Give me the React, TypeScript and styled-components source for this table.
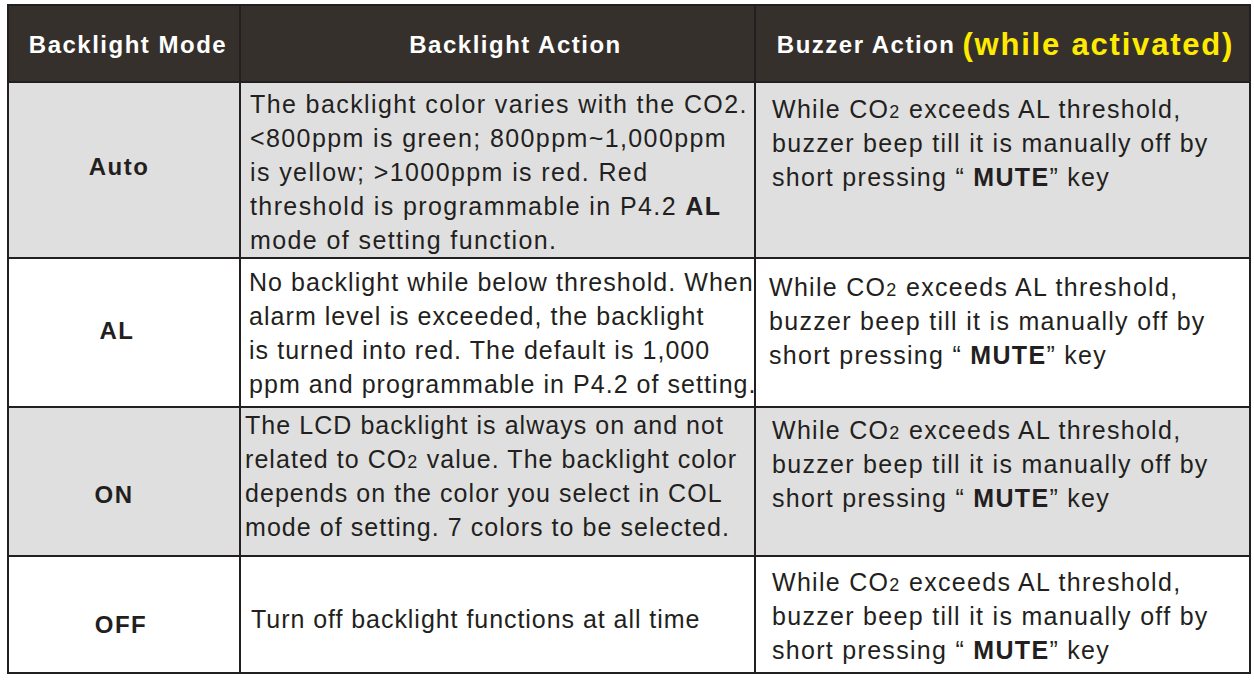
import React from 'react';
import styled, { createGlobalStyle } from 'styled-components';

const GlobalStyle = createGlobalStyle`
  html, body {
    margin: 0;
    padding: 0;
    background: #ffffff;
  }
  body {
    font-family: "Liberation Sans", Arial, sans-serif;
    color: #231f20;
  }
`;

const Page = styled.div`
  padding: 4px 0 0 7px;
`;

const Table = styled.div`
  display: grid;
  grid-template-columns: 230px 513px 493px;
  grid-template-rows: 75px 174px 147px 147px 115px;
  gap: 2px;
  width: max-content;
  background: #231f20;
  border: 2px solid #231f20;
`;

const HeadCell = styled.div<{ $pl?: number }>`
  display: flex;
  align-items: center;
  justify-content: center;
  padding: 2px 0 0 ${(p) => p.$pl ?? 0}px;
  background: #36302c;
  color: #ffffff;
  font-size: 24px;
  font-weight: 700;
  letter-spacing: 1.5px;
  white-space: nowrap;
`;

const Highlight = styled.span`
  color: #ffeb00;
  font-size: 31px;
  letter-spacing: 1.8px;
  margin-left: 7px;
`;

const shift = (v: number) => `${Math.max(v, 0) * 2}px`;

const ModeCell = styled.div<{ $shade: boolean; $dy: number; $dx: number }>`
  display: flex;
  align-items: center;
  justify-content: center;
  padding-top: ${(p) => shift(p.$dy)};
  padding-bottom: ${(p) => shift(-p.$dy)};
  padding-left: ${(p) => shift(p.$dx)};
  padding-right: ${(p) => shift(-p.$dx)};
  background: ${(p) => (p.$shade ? '#dfdfdf' : '#ffffff')};
  font-size: 24px;
  font-weight: 700;
  letter-spacing: 1.5px;
`;

const TextCell = styled.div<{ $shade: boolean; $pt: number; $pl: number; $ls?: number; $center?: boolean }>`
  display: flex;
  flex-direction: column;
  justify-content: ${(p) => (p.$center ? 'center' : 'flex-start')};
  padding: ${(p) => p.$pt}px 0 0 ${(p) => p.$pl}px;
  background: ${(p) => (p.$shade ? '#dfdfdf' : '#ffffff')};
  font-size: 25px;
  letter-spacing: ${(p) => p.$ls ?? 1.3}px;
  white-space: nowrap;
  overflow: visible;
  position: relative;
`;

const Line = styled.div`
  height: 34px;
  line-height: 34px;
`;

const Small = styled.span`
  font-size: 18px;
  line-height: 0;
  letter-spacing: 1.4px;
`;

const Strong = styled.b`
  font-weight: 700;
`;

const BuzzerText: React.FC = () => (
  <>
    <Line>
      While CO<Small>2</Small> exceeds AL threshold,
    </Line>
    <Line>buzzer beep till it is manually off by</Line>
    <Line>
      short pressing “ <Strong>MUTE</Strong>” key
    </Line>
  </>
);

const App: React.FC = () => {
  return (
    <Page>
      <GlobalStyle />
      <Table>
        <HeadCell $pl={8}>Backlight Mode</HeadCell>
        <HeadCell $pl={36}>Backlight Action</HeadCell>
        <HeadCell $pl={6}>
          Buzzer Action<Highlight>(while activated)</Highlight>
        </HeadCell>

        <ModeCell $shade $dy={-3} $dx={-5}>Auto</ModeCell>
        <TextCell $shade $pt={4} $pl={9} $ls={1.4}>
          <Line>The backlight color varies with the CO2.</Line>
          <Line>&lt;800ppm is green; 800ppm~1,000ppm</Line>
          <Line>is yellow; &gt;1000ppm is red. Red</Line>
          <Line>
            threshold is programmable in P4.2 <Strong>AL</Strong>
          </Line>
          <Line>mode of setting function.</Line>
        </TextCell>
        <TextCell $shade $pt={9} $pl={16}>
          <BuzzerText />
        </TextCell>

        <ModeCell $shade={false} $dy={-2} $dx={-7}>AL</ModeCell>
        <TextCell $shade={false} $pt={6} $pl={8} $ls={1.05}>
          <Line>No backlight while below threshold. When</Line>
          <Line>alarm level is exceeded, the backlight</Line>
          <Line>is turned into red. The default is 1,000</Line>
          <Line>ppm and programmable in P4.2 of setting.</Line>
        </TextCell>
        <TextCell $shade={false} $pt={11} $pl={13}>
          <BuzzerText />
        </TextCell>

        <ModeCell $shade $dy={13} $dx={-10}>ON</ModeCell>
        <TextCell $shade $pt={0} $pl={4} $ls={1.05}>
          <Line>The LCD backlight is always on and not</Line>
          <Line>
            related to CO<Small>2</Small> value. The backlight color
          </Line>
          <Line>depends on the color you select in COL</Line>
          <Line>mode of setting. 7 colors to be selected.</Line>
        </TextCell>
        <TextCell $shade $pt={5} $pl={16}>
          <BuzzerText />
        </TextCell>

        <ModeCell $shade={false} $dy={10} $dx={-3}>OFF</ModeCell>
        <TextCell $shade={false} $pt={8} $pl={10} $ls={0.95} $center>
          <Line>Turn off backlight functions at all time</Line>
        </TextCell>
        <TextCell $shade={false} $pt={8} $pl={16}>
          <BuzzerText />
        </TextCell>
      </Table>
    </Page>
  );
};

export default App;
